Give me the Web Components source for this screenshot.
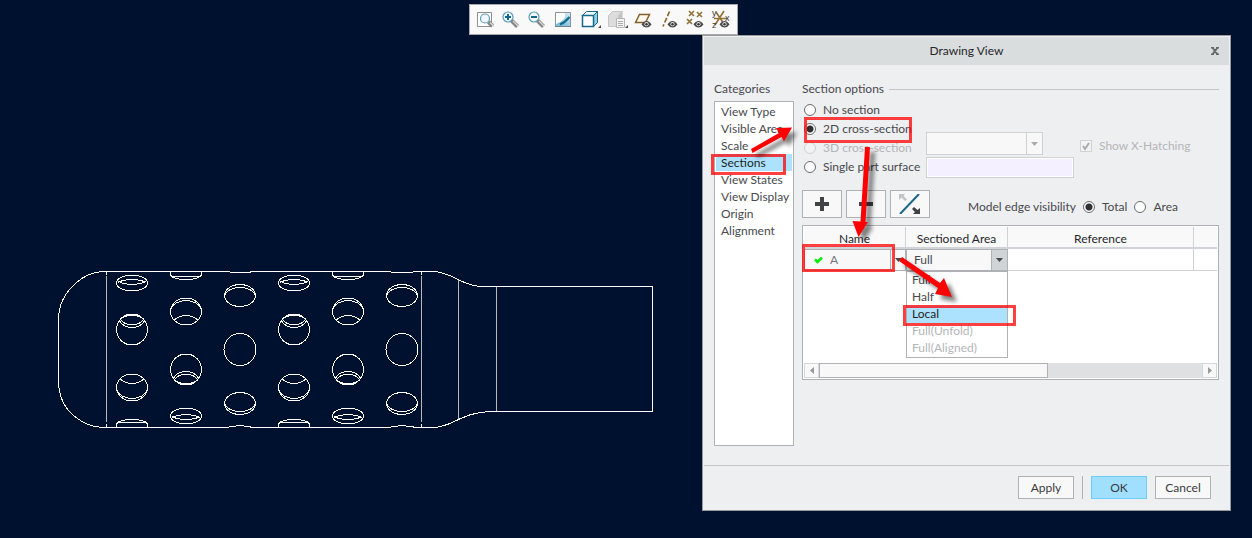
<!DOCTYPE html>
<html lang="en">
<head>
<meta charset="utf-8">
<title>Drawing View</title>
<style>
    html, body { height: 100%; margin: 0; }
    body {
        background: #00112f; color: #48494d; overflow: hidden;
        font: 12px/16px Lato, "Open Sans", sans-serif;
        --line: #b0b1b4; --soft-line: #cfd1d4; --face: #f8f8f8; --select: #ade2ff; --mute: #b4b5b8;
    }
</style>
</head>
<body>
<cad-workspace>
    <model-view slot="model"></model-view>
    <view-toolbar slot="toolbar">
        <tool-button icon="refit" label="Refit"></tool-button>
        <tool-button icon="zoomIn" label="Zoom In"></tool-button>
        <tool-button icon="zoomOut" label="Zoom Out"></tool-button>
        <tool-button icon="repaint" label="Repaint"></tool-button>
        <tool-button icon="style" label="Display Style" menu></tool-button>
        <tool-button icon="saved" label="Saved Orientations" menu></tool-button>
        <tool-button icon="plane" label="Plane Display"></tool-button>
        <tool-button icon="axis" label="Axis Display"></tool-button>
        <tool-button icon="point" label="Point Display"></tool-button>
        <tool-button icon="csys" label="Csys Display"></tool-button>
    </view-toolbar>
    <view-dialog slot="dialog" heading="Drawing View">
        <category-list slot="side" items="View Type,Visible Area,Scale,Sections,View States,View Display,Origin,Alignment" selected="Sections"></category-list>
        <section-options></section-options>
        <section-tools></section-tools>
        <section-table></section-table>
        <push-button slot="footer">Apply</push-button>
        <push-button slot="footer" primary>OK</push-button>
        <push-button slot="footer">Cancel</push-button>
        <callout-layer slot="overlay"></callout-layer>
    </view-dialog>
</cad-workspace>

<script>
/** Shared look of radio buttons and tick boxes. */
const choiceStyles = `
    label { display: flex; align-items: center; gap: 7px; white-space: nowrap; }
    input[type=radio], input[type=checkbox] {
        appearance: none; box-sizing: border-box; width: 12px; height: 12px; margin: 0;
        flex: none; border: 1px solid #6c6c6e; background: #fdfdfd;
    }
    input[type=radio] { border-radius: 50%; }
    input[type=radio]:checked { background: radial-gradient(circle, #303033 0 3px, #fdfdfd 4px); }
    input:disabled { border-color: var(--soft-line); background: #f2f3f4; }
    .off { color: var(--mute); }
`;

class CadWorkspace extends HTMLElement {
    constructor() {
        super();
        this.attachShadow({ mode: 'open' }).innerHTML = `
            <style>
                :host { display: block; position: relative; height: 100%; }
                ::slotted(*) { position: absolute; }
                ::slotted([slot=model]) { left: 50px; top: 260px; }
                ::slotted([slot=toolbar]) { left: 469px; top: 4px; }
                ::slotted([slot=dialog]) { right: 21px; top: 35px; }
            </style>
            <slot name="model"></slot>
            <slot name="toolbar"></slot>
            <slot name="dialog"></slot>
        `;
    }
}

/**
 * <model-view>
 * Wireframe of the perforated tube. The hole columns repeat along the axis.
 */
class ModelView extends HTMLElement {
    constructor() {
        super();
        this.attachShadow({ mode: 'open' }).innerHTML = `
            <style>
                :host { display: block; }
                svg { display: block; fill: none; stroke: #fff; shape-rendering: crispEdges; }
                .edge { stroke: #b9b8b4; }
            </style>
            <svg width="610" height="180" viewBox="0 0 610 180" role="img" aria-label="Perforated tube">
                <defs>
                    <g id="a">
                        <ellipse cy="23" rx="15.5" ry="8"/>
                        <path d="M-14.500 20.500C-9 25.500 9 25.500 14.500 20.500M-13.500 22.500C-8 18.500 8 18.500 13.500 22.500"/>
                        <circle cy="69.500" r="15.500"/>
                        <path d="M-13 60C-8 70 8 70 13 60M-11.500 59.500C-7 66.500 7 66.500 11.500 59.500M-11 58.500C-6 54.500 6 54.500 11 58.500"/>
                        <ellipse cy="127.500" rx="15.500" ry="13.500"/>
                        <path d="M-11.500 119C-6 125 6 125 11.500 119M-15.500 128C-13 142 13 142 15.500 128"/>
                        <path d="M-15.500 167V164C-12 158 12 158 15.500 164V167M-13 162.500H13"/>
                    </g>
                    <g id="b">
                        <path d="M-15.500 12V15C-12 21 12 21 15.500 15V12M-13 16.500H13"/>
                        <ellipse cy="51.500" rx="15.500" ry="13.500"/>
                        <path d="M-11.500 60C-6 54 6 54 11.500 60M-15.500 51C-13 37 13 37 15.500 51"/>
                        <circle cy="109.500" r="15.500"/>
                        <path d="M-13 119C-8 109 8 109 13 119M-11.500 119.500C-7 112.500 7 112.500 11.500 119.500M-11 120.500C-6 124.500 6 124.500 11 120.500"/>
                        <ellipse cy="156" rx="15.500" ry="8"/>
                        <path d="M-14.500 158.500C-9 153.500 9 153.500 14.500 158.500M-13.500 156.500C-8 160.500 8 160.500 13.500 156.500"/>
                    </g>
                    <g id="c">
                        <ellipse cy="35.500" rx="15.500" ry="11"/>
                        <path d="M-15.500 36C-12 24.500 12 24.500 15.500 36"/>
                        <circle cy="89.500" r="16"/>
                        <ellipse cy="143.500" rx="15.500" ry="11"/>
                        <path d="M-15.500 143C-12 154.500 12 154.500 15.500 143"/>
                    </g>
                </defs>
                <path d="M56.500 16V162M371.500 16V162M408.500 19V160M446.500 27V151" class="edge"/>
                <path d="M56.500 11V15M56.500 164V167M371.500 11V15M371.500 164V167"/>
                <path d="M178 11.500H54C46 11.500 35 15 26 23Q8.500 38 8.500 60V120Q8.500 143 24 156Q38 167.500 54 167.500H176L182 166.500 190 165.500 198 166.500 203 167.500H338L344 166.500 352 165.500 360 166.500 367 167.500H382C396 167.500 404 161 412 158Q425 151.500 446 151.500H602.500V26.500H433C420 26.500 414 22 408 19.500Q393 11.500 382 11.500H366L360 12.500H344L338 11.500H203L198 12.500H182Z"/>
                <use href="#a" x="82"/><use href="#b" x="136"/><use href="#c" x="190"/>
                <use href="#a" x="244"/><use href="#b" x="298"/><use href="#c" x="352"/>
            </svg>
        `;
    }
}

class ViewToolbar extends HTMLElement {
    constructor() {
        super();
        this.attachShadow({ mode: 'open' }).innerHTML = `
            <style>
                :host {
                    display: flex; align-items: center; box-sizing: border-box; height: 31px;
                    padding: 0 3px 2px 2px; background: #f9f9f9; border: 1px solid #a5a6a8;
                }
            </style>
            <slot></slot>
        `;
    }
}

const lens = (x, y, r, sign) => `
    <path d="M${x + 3.5} ${y + 3.5}l6 6" stroke="#858585" stroke-width="4"/>
    <path d="M${x + 5} ${y + 4}l5 5" stroke="#d9d9d9" stroke-width="1.2"/>
    <circle cx="${x}" cy="${y}" r="${r}" fill="#eef8fd" stroke="#5f9ab5" stroke-width="1.200"/>${sign}`;
const eye = `
    <path d="M10.500 15.500Q12.500 12 15.500 12T20.500 15.500Q18.500 18.500 15.500 18.500T10.500 15.500Z" fill="#4c4a4b"/>
    <circle cx="15.500" cy="15.200" r="2.100" fill="#e4e4e4"/><circle cx="15.500" cy="15.200" r="1.200" fill="#333"/>`;
const toolIcons = {
    refit: `<path d="M4.500 3.500h14v14h-14z" fill="#fff" stroke="#8f8f8f"/>
        ${lens(12, 9.5, 4.5, '').replace(/l[56] [56]/g, 'l4 4')}`,
    zoomIn: lens(9, 8, 5, '<path d="M9 5v6M6 8h6" stroke="#11668c" stroke-width="2"/>'),
    zoomOut: lens(9, 8, 5, '<path d="M6 8h6" stroke="#11668c" stroke-width="2"/>'),
    repaint: `<defs><linearGradient id="g" x1="0" y1="1" x2="1" y2="0"><stop offset=".3" stop-color="#7dbfdc"/><stop offset="1" stop-color="#d6eff9"/></linearGradient></defs>
        <path d="M4.500 3.500h15v14h-15z" fill="url(#g)" stroke="#8d9499"/>
        <path d="M5 4h9Q16 11 5 15z" fill="#fff"/>
        <path d="M9 15.500Q14 13.500 18.500 8" stroke="#15678c" stroke-width="2"/><path d="M4 17.500h16" stroke="#7b8286"/>`,
    style: `<path d="M4.500 6.500l4-4h11l-4 4z" fill="#eefafd" stroke="#15678c"/>
        <path d="M15.500 6.500l4-4v11l-4 4z" fill="#8fcfe5" stroke="#15678c"/>
        <path d="M4.500 6.500h11v11h-11z" fill="#fff" stroke="#15678c" stroke-width="1.500"/>`,
    saved: `<path d="M3.500 6.500l4-4h10l-4 4v11h-10z" fill="#dcdcdc" stroke="#c6c6c6"/>
        <path d="M13.500 6.500l4-4v11l-4 4z" fill="#c4c4c4"/>
        <path d="M11.500 9.500h8v9h-8z" fill="#f4f4f4" stroke="#b5b5b5"/><path d="M13 12.500h5M13 14.500h5M13 16.500h5" stroke="#a9a9a9"/>`,
    plane: `<path d="M4.500 13.500l4-8h10l-4 8z" fill="#fdf8ee" stroke="#886026" stroke-width="1.500"/>${eye}`,
    axis: `<path d="M12.500 2.500l-6.500 15" stroke="#886026" stroke-width="1.600" stroke-dasharray="5 2"/>${eye}`,
    point: `<path d="M6 2l5 5m0-5l-5 5M14 3l5 5m0-5l-5 5M4 10l5 5m0-5l-5 5" stroke="#937036" stroke-width="1.600"/>${eye}`,
    csys: `<path d="M7 3l8 12M15 2L6 16M5 9.500h13" stroke="#937036" stroke-width="1.600"/>${eye}
        <g fill="#3b3b3b" font-family="Liberation Sans, sans-serif" font-size="9">
        <text x="3" y="7">y</text><text x="16" y="12">x</text><text x="3" y="19">z</text></g>`
};

/** <tool-button icon label [menu]> one button of the graphics toolbar. */
class ToolButton extends HTMLElement {
    connectedCallback() {
        this.attachShadow({ mode: 'open' }).innerHTML = `
            <style>
                :host { display: block; width: 26px; }
                :host([icon=style]) { width: 28px; }
                button { display: flex; justify-content: center; width: 100%; padding: 0; border: 0; background: none; }
                svg { display: block; fill: none; overflow: visible; }
            </style>
            <button aria-label="${this.getAttribute('label')}">
                <svg width="24" height="20" viewBox="0 0 24 20">
                    ${toolIcons[this.getAttribute('icon')]}
                    ${this.hasAttribute('menu') ? '<path d="M23 16v3h-3z" fill="#4a4a4a"/>' : ''}
                </svg>
            </button>
        `;
    }
}

/**
 * <view-dialog heading>
 * Window frame: title bar, side list, main area, footer and an overlay.
 */
class ViewDialog extends HTMLElement {
    connectedCallback() {
        this.attachShadow({ mode: 'open' }).innerHTML = `
            <style>
                :host {
                    display: block; box-sizing: border-box; width: min(529px, 100%); padding: 1px;
                    background: #eeeff1; border: 1px solid #999a9b;
                }
                header {
                    display: grid; grid-template-columns: 28px 1fr 28px; align-items: center;
                    height: 28px; background: #d9dddd;
                }
                h1 { grid-column: 2; margin: 0; font: inherit; text-align: center; color: #26262a; }
                header button { display: grid; place-items: center; height: 100%; padding: 0; border: 0; background: none; }
                .body { display: grid; grid-template-columns: 80px 1fr; gap: 8px; padding: 16px 10px 19px; }
                main { min-width: 0; }
                footer {
                    display: flex; justify-content: flex-end; gap: 8px; padding: 10px 18px;
                    border-top: 1px solid #c4c5c9;
                }
                ::slotted([primary]) { border-left: 1px solid var(--line); padding-left: 8px; }
            </style>
            <header>
                <h1>${this.getAttribute('heading')}</h1>
                <button aria-label="Close"><svg width="8" height="8" viewBox="0 0 8 8"><path d="M1 0l6 8M7 0L1 8M0 .5h3M5 .5h3M0 7.500h3M5 7.500h3" stroke="#68696d" stroke-width="2"/></svg></button>
            </header>
            <div class="body">
                <slot name="side"></slot>
                <main><slot></slot></main>
            </div>
            <footer><slot name="footer"></slot></footer>
            <slot name="overlay"></slot>
        `;
    }
}

class CategoryList extends HTMLElement {
    connectedCallback() {
        const selected = this.getAttribute('selected');
        const rows = this.getAttribute('items').split(',').map(name =>
            `<button role="option" aria-selected="${name === selected}">${name}</button>`).join('');
        this.attachShadow({ mode: 'open' }).innerHTML = `
            <style>
                :host { display: flex; flex-direction: column; gap: 4px; }
                [role=listbox] {
                    box-sizing: border-box; min-height: 345px; padding: 1px;
                    background: #fff; border: 1px solid var(--line);
                }
                button {
                    display: block; width: 100%; height: 17px; padding: 0 0 0 5px; border: 0; background: none;
                    font: inherit; color: inherit; text-align: left; white-space: nowrap;
                }
                button[aria-selected=true] { background: var(--select); color: #1d1e22; }
            </style>
            <div id="cap">Categories</div>
            <div role="listbox" aria-labelledby="cap">${rows}</div>
        `;
    }
}

/**
 * <drop-box options label [disabled] [tone]>
 * A native select with its own arrow button.
 */
class DropBox extends HTMLElement {
    connectedCallback() {
        const options = (this.getAttribute('options') || '').split(',').map(o => `<option>${o}</option>`).join('');
        this.attachShadow({ mode: 'open' }).innerHTML = `
            <style>
                :host { display: grid; grid-template-columns: 1fr 16px; border: 1px solid var(--line); background: var(--face); box-sizing: border-box; }
                :host([disabled]) { border-color: var(--soft-line); }
                select {
                    grid-area: 1 / 1 / 2 / 3; min-width: 0; width: 100%; height: 100%; margin: 0; padding: 0 16px 0 7px;
                    appearance: none; border: 0; background: none; font: inherit; color: inherit;
                }
                span { grid-area: 1 / 2; display: grid; place-items: center; border-left: 1px solid var(--line); pointer-events: none; }
                :host([disabled]) span { border-color: var(--soft-line); color: #aaabad; }
                :host([tone=dark]) span { background: #d0d4d6; }
            </style>
            <select aria-label="${this.getAttribute('label')}" ${this.hasAttribute('disabled') ? 'disabled' : ''}>${options}</select>
            <span><svg width="7" height="4" viewBox="0 0 7 4"><path d="M0 0h7L3.500 4z" fill="currentColor"/></svg></span>
        `;
    }
}

class SectionOptions extends HTMLElement {
    constructor() {
        super();
        this.attachShadow({ mode: 'open' }).innerHTML = `
            <style>
                ${choiceStyles}
                :host { display: block; }
                h2 { display: flex; align-items: center; gap: 5px; margin: 0; font: inherit; }
                h2::after { content: ""; flex: 1; border-top: 1px solid #c4c5c9; }
                .cols { display: grid; grid-template-columns: 124px 1fr; padding-top: 3px; }
                .radios { padding-bottom: 2px; }
                .radios label { height: 19px; padding-left: 2px; }
                .fields { display: grid; grid-template-columns: 148px auto; gap: 2px 6px; justify-content: start; align-content: end; }
                .fields label { padding-top: 4px; }
                drop-box { width: 117px; height: 23px; }
                .fields input[type=text] {
                    box-sizing: border-box; width: 148px; height: 21px; margin: 0; padding: 0 4px;
                    border: 1px solid var(--soft-line); outline: 0; background: #f4f0ff; box-shadow: inset 0 0 0 1px #fff; font: inherit;
                }
                .tick { display: grid; flex: none; }
                .tick > * { grid-area: 1 / 1; }
            </style>
            <h2>Section options</h2>
            <div class="cols">
                <div class="radios">
                    <label><input type="radio" name="kind">No section</label>
                    <label><input type="radio" name="kind" checked>2D cross-section</label>
                    <label class="off"><input type="radio" name="kind" disabled>3D cross-section</label>
                    <label><input type="radio" name="kind">Single part surface</label>
                </div>
                <div class="fields">
                    <drop-box label="3D cross-section" disabled></drop-box>
                    <label class="off">
                        <span class="tick"><input type="checkbox" checked disabled><svg width="12" height="12" viewBox="0 0 12 12"><path d="M3 6l2 3 4-6" fill="none" stroke="#aaabae" stroke-width="2"/></svg></span>
                        Show X-Hatching
                    </label>
                    <input type="text" aria-label="Surface">
                </div>
            </div>
        `;
    }
}

class SectionTools extends HTMLElement {
    constructor() {
        super();
        this.attachShadow({ mode: 'open' }).innerHTML = `
            <style>
                ${choiceStyles}
                :host { display: flex; align-items: center; padding: 12px 0 7px; gap: 4px; }
                button {
                    display: grid; place-items: center; width: 40px; height: 28px; padding: 0;
                    border: 1px solid var(--line); background: var(--face);
                }
                .edges { display: flex; align-items: center; gap: 7px; margin-left: 34px; padding-top: 6px; white-space: nowrap; }
            </style>
            <button aria-label="Add"><svg width="14" height="14" viewBox="0 0 14 14"><path d="M7 0v14M0 7h14" stroke="#414246" stroke-width="4"/></svg></button>
            <button aria-label="Remove"><svg width="14" height="14" viewBox="0 0 14 14"><path d="M0 7h14" stroke="#414246" stroke-width="4"/></svg></button>
            <button aria-label="Flip direction">
                <svg width="22" height="20" viewBox="0 0 22 20" fill="none">
                    <path d="M1 20L20 0" stroke="#1b6688" stroke-width="2"/>
                    <path d="M0 0h6L4.500 2 8 5.500 6 7 2.500 3.500 0 6z" fill="#c2c3c5"/>
                    <path d="M21 20h-7l2-2-3-3 2-2 3.500 3 2.500-2z" fill="#414246"/>
                </svg>
            </button>
            <div class="edges" role="radiogroup" aria-labelledby="cap">
                <span id="cap">Model edge visibility</span>
                <label><input type="radio" name="edge" checked>Total</label>
                <label><input type="radio" name="edge">Area</label>
            </div>
        `;
    }
}

/**
 * <section-table>
 * Sections of the view, with the area menu of the first row open.
 */
class SectionTable extends HTMLElement {
    constructor() {
        super();
        this.attachShadow({ mode: 'open' }).innerHTML = `
            <style>
                :host {
                    display: flex; flex-direction: column; box-sizing: border-box; min-height: 155px;
                    padding: 1px; background: #fff; border: 1px solid var(--line);
                }
                table { width: 100%; table-layout: fixed; border-collapse: separate; border-spacing: 0; }
                col.narrow { width: 102px; }
                col.wide { width: 186px; }
                th, td { box-sizing: border-box; height: 22px; padding: 0; border-right: 1px solid var(--soft-line); }
                th { padding-top: 3px; background: #f9f9f9; border-bottom: 2px solid #d0d3d7; font-weight: normal; color: #26262a; }
                td { position: relative; border-bottom: 1px solid var(--soft-line); }
                td.edit { border: 0; }
                th:last-child, td:last-child { border-right: 0; }
                drop-box { height: 22px; }
                .name { display: grid; }
                .name > * { grid-area: 1 / 1; }
                .name svg { place-self: center start; margin-left: 10px; z-index: 1; }
                ul {
                    position: absolute; z-index: 1; top: 100%; left: 0; right: 0; margin: 0; padding: 0;
                    list-style: none; background: #fff; border: 1px solid var(--line);
                }
                li { height: 17px; padding-left: 5px; white-space: nowrap; }
                li.on { background: var(--select); color: #1d1e22; }
                li.off { color: var(--mute); }
                .scroll { display: grid; grid-template-columns: 15px 229fr 154fr 15px; height: 15px; margin-top: auto; background: #dfe0e1; }
                .scroll button { display: grid; place-items: center; padding: 0; border: 1px solid #d4d6d8; background: var(--face); color: #97989a; }
                .scroll i { border: 1px solid var(--line); background: var(--face); }
                .scroll button:last-child { grid-column: 4; }
            </style>
            <table>
                <colgroup><col class="narrow"><col class="narrow"><col class="wide"><col></colgroup>
                <thead><tr><th>Name</th><th>Sectioned Area</th><th>Reference</th><th></th></tr></thead>
                <tbody><tr>
                    <td class="edit"><div class="name">
                        <name-box value="A"></name-box>
                        <svg width="9" height="7" viewBox="0 0 9 7"><path d="M1 2.500l2.500 2.500L8 .5" fill="none" stroke="#00f000" stroke-width="2.500"/></svg>
                    </div></td>
                    <td class="edit">
                        <drop-box options="Full" label="Sectioned area" tone="dark"></drop-box>
                        <ul role="listbox">
                            <li role="option">Full</li>
                            <li role="option">Half</li>
                            <li role="option" class="on">Local</li>
                            <li role="option" class="off">Full(Unfold)</li>
                            <li role="option" class="off">Full(Aligned)</li>
                        </ul>
                    </td>
                    <td></td><td></td>
                </tr></tbody>
            </table>
            <div class="scroll">
                <button aria-label="Scroll left"><svg width="4" height="7" viewBox="0 0 4 7"><path d="M4 0v7L0 3.500z" fill="currentColor"/></svg></button>
                <i></i>
                <button aria-label="Scroll right"><svg width="4" height="7" viewBox="0 0 4 7"><path d="M0 0v7l4-3.500z" fill="currentColor"/></svg></button>
            </div>
        `;
    }
}

/** <name-box value> section name, picked from a list. */
class NameBox extends HTMLElement {
    connectedCallback() {
        this.attachShadow({ mode: 'open' }).innerHTML = `
            <style>
                :host { display: grid; grid-template-columns: 1fr 15px; box-sizing: border-box; height: 22px; border: 1px solid var(--line); background: var(--face); }
                select {
                    grid-area: 1 / 1 / 2 / 3; width: 100%; margin: 0; padding: 0 15px 0 25px; appearance: none;
                    border: 0; background: none; font: inherit; color: #77787c;
                }
                span { grid-area: 1 / 2; display: grid; place-items: center; border-left: 1px solid var(--line); pointer-events: none; }
            </style>
            <select aria-label="Section name"><option>${this.getAttribute('value')}</option></select>
            <span><svg width="7" height="4" viewBox="0 0 7 4"><path d="M0 0h7L3.500 4z" fill="currentColor"/></svg></span>
        `;
    }
}

class PushButton extends HTMLElement {
    constructor() {
        super();
        this.attachShadow({ mode: 'open' }).innerHTML = `
            <style>
                :host { display: block; }
                button {
                    box-sizing: border-box; width: 56px; height: 23px; padding: 0; border: 1px solid var(--line);
                    background: var(--face); font: inherit; color: #3a3b40;
                }
                :host([primary]) button { background: #a1dfff; border-color: #6fcbfa; }
            </style>
            <button><slot></slot></button>
        `;
    }
}

/**
 * <callout-layer>
 * Red frames and arrows that lead through the steps.
 */
class CalloutLayer extends HTMLElement {
    constructor() {
        super();
        this.attachShadow({ mode: 'open' }).innerHTML = `
            <style>
                :host { position: absolute; z-index: 2; inset: -1px; pointer-events: none; }
                svg { display: block; overflow: visible; }
                .frames { fill: none; stroke: #f00; stroke-opacity: .75; stroke-width: 3; }
                .arrows { fill: #f00; filter: drop-shadow(5px 5px 2px rgba(0, 0, 0, .5)); }
            </style>
            <svg width="529" height="476" viewBox="702 35 529 476">
                <g class="frames">
                    <path d="M712.500 155.500h72v18h-72z"/>
                    <path d="M805.500 118.500h105v23h-105z"/>
                    <path d="M803.500 245.500h90v25h-90z"/>
                    <path d="M904.500 306.500h110v18h-110z"/>
                </g>
                <g class="arrows">
                    <path d="M751 149l28-16-3-5 16-.5-8 14-2.500-4.500-29 16z"/>
                    <path d="M865 147h5l-4.500 75h2.500L858.500 237 852.500 221l8 .5z"/>
                    <path d="M902 257l38 26 4-5 8 19-17-3 3-6-39-27z"/>
                </g>
            </svg>
        `;
    }
}

customElements.define('cad-workspace', CadWorkspace);
customElements.define('model-view', ModelView);
customElements.define('view-toolbar', ViewToolbar);
customElements.define('tool-button', ToolButton);
customElements.define('view-dialog', ViewDialog);
customElements.define('category-list', CategoryList);
customElements.define('drop-box', DropBox);
customElements.define('name-box', NameBox);
customElements.define('section-options', SectionOptions);
customElements.define('section-tools', SectionTools);
customElements.define('section-table', SectionTable);
customElements.define('push-button', PushButton);
customElements.define('callout-layer', CalloutLayer);
</script>
</body>
</html>
